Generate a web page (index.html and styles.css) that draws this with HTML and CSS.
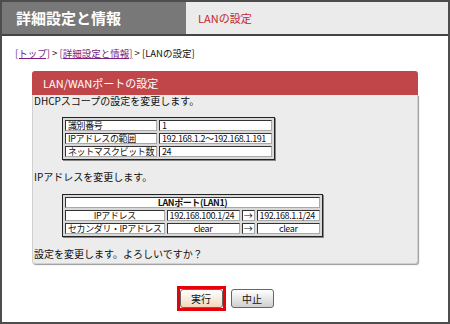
FILE: index.html
```html
<!DOCTYPE html>
<html lang="ja">
<head>
  <meta charset="UTF-8">
  <title>LANの設定</title>
  <link rel="stylesheet" href="styles.css">
</head>
<body>
  <div class="frame">
    <div class="head">
      <div class="head-title">詳細設定と情報</div>
      <div class="head-sub">LANの設定</div>
    </div>
    <div class="crumbs">
      <a href="#">[トップ]</a> &gt; <a href="#">[詳細設定と情報]</a> &gt; [LANの設定]
    </div>
    <div class="panel">
      <div class="panel-head">LAN/WANポートの設定</div>
      <div class="panel-body">
        <p>DHCPスコープの設定を変更します。</p>
        <table class="grid scope">
          <tr><td class="label">識別番号</td><td>1</td></tr>
          <tr><td class="label">IPアドレスの範囲</td><td>192.168.1.2～192.168.1.191</td></tr>
          <tr><td class="label">ネットマスクビット数</td><td>24</td></tr>
        </table>
        <p>IPアドレスを変更します。</p>
        <table class="grid change">
          <tr><th colspan="4">LANポート(LAN1)</th></tr>
          <tr><td class="label c">IPアドレス</td><td>192.168.100.1/24</td><td class="arrow">→</td><td>192.168.1.1/24</td></tr>
          <tr><td class="label">セカンダリ・IPアドレス</td><td class="c">clear</td><td class="arrow">→</td><td class="c">clear</td></tr>
        </table>
        <p>設定を変更します。よろしいですか？</p>
      </div>
    </div>
    <div class="actions">
      <span class="focus"><button class="btn go">実行</button></span>
      <button class="btn">中止</button>
    </div>
  </div>
</body>
</html>
```

FILE: styles.css
```css
body { margin: 0; font-family: "Noto Sans CJK JP", "DejaVu Sans", sans-serif; color: #111; }
.frame { width: 450px; height: 324px; box-sizing: border-box; border: 2px solid #4d4d4d; background: #fff; }
.head { display: flex; height: 32px; border-bottom: 2px solid #444; background: #ebebeb; }
.head-title { width: 184px; background: #787878; color: #fff; font-size: 15px; font-weight: bold; line-height: 32px; padding-left: 14px; box-sizing: border-box; }
.head-sub { color: #c4262c; font-size: 11px; line-height: 32px; padding-left: 12px; }
.crumbs { font-size: 9.5px; line-height: 14px; padding-left: 13px; margin-top: 10px; }
.crumbs a { color: #7a1f80; }
.panel { width: 386px; margin: 11px 0 0 30px; }
.panel-head { height: 24px; background: #c1464a; color: #fff; font-size: 11px; line-height: 25px; padding-left: 11px; border-radius: 3px 3px 0 0; }
.panel-body { background: #ececec; border: 1px solid #d0d0d0; border-top: none; box-shadow: 1px 1px 1px #999; border-radius: 0 0 3px 3px; padding: 0 0 3px 1px; font-size: 10px; }
.panel-body p { margin: 0; line-height: 12px; }
.grid { border: 1px solid #222; border-spacing: 2px; background: #d9d9d9; box-shadow: 1px 1px 0 #888; margin-left: 28px; font-size: 9px; letter-spacing: -0.4px; }
.grid td, .grid th { border: 1px solid; border-color: #333 #aaa #aaa #333; background: #fff; padding: 0 2px; height: 9px; line-height: 9px; white-space: nowrap; }
.grid th { font-weight: bold; }
.grid .label { width: 83px; }
.grid .c, .grid th { text-align: center; }
.grid .arrow { padding: 0 1px; text-align: center; }
.scope { width: 213px; margin-top: 10px; margin-bottom: 11px; }
.change { width: 261px; margin-top: 11px; margin-bottom: 11px; }
.actions { display: flex; justify-content: center; align-items: center; gap: 5px; margin-top: 22px; }
.focus { border: 3px solid #e8000b; display: flex; }
.btn { width: 43px; height: 19px; border: 1px solid #666; border-radius: 3px; background: linear-gradient(#fff, #cfcfcf); font-family: inherit; font-size: 10px; padding: 0; color: #111; }
.btn.go { background: linear-gradient(#fff, #f3d9bd); }
```
